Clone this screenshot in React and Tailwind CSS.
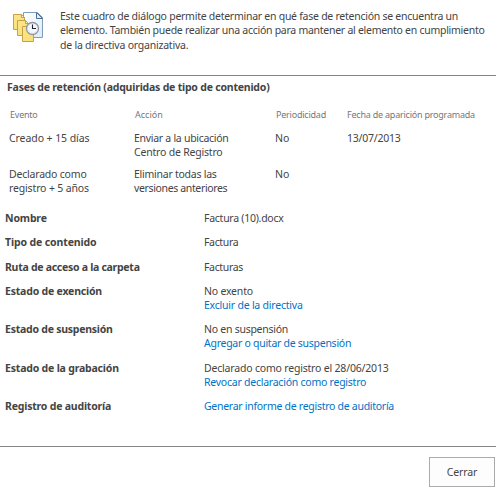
function DocumentsIcon() {
  return (
    <svg width="32" height="32" viewBox="0 0 32 32" className="block shrink-0">
      <defs>
        <linearGradient id="folderFill" x1="0" y1="0" x2="1" y2="1">
          <stop offset="0" stopColor="#fbe68a" />
          <stop offset="1" stopColor="#f8de74" />
        </linearGradient>
        <linearGradient id="pageFill" x1="0" y1="0" x2="1" y2="1">
          <stop offset="0" stopColor="#ffffff" />
          <stop offset="1" stopColor="#dcebf8" />
        </linearGradient>
      </defs>
      <path d="M11.5 0.5h14l5 5v20h-19z" fill="url(#pageFill)" stroke="#7f9cba" />
      <path d="M24.500 0.500v6h6z" fill="#dcebf8" stroke="#4d7196" />
      <path d="M1.500 2.500h8l3 3v12h-11z" fill="url(#folderFill)" stroke="#c9a04a" />
      <path d="M9.500 2.500v3h3z" fill="#fff8d0" stroke="#c9a04a" />
      <path d="M5.500 8.500h8l3 3v12h-11z" fill="url(#folderFill)" stroke="#c9a04a" />
      <path d="M13.500 8.500v3h3z" fill="#fff8d0" stroke="#c9a04a" />
      <path d="M10.500 14.500h8l3 3v12h-11z" fill="url(#folderFill)" stroke="#c9a04a" />
      <circle cx="20.500" cy="16.500" r="6" fill="#f4f8fb" stroke="#8f969d" strokeWidth="1.300" />
      <circle cx="20.500" cy="16.500" r="4.600" fill="none" stroke="#c5ccd3" strokeWidth="0.700" strokeDasharray="0.8 1.608" />
      <path d="M20.500 12.500v4h3.500" fill="none" stroke="#1c2733" strokeWidth="1.100" />
    </svg>
  );
}

function Line({ children, className = "" }) {
  return <div className={`whitespace-nowrap ${className}`}>{children}</div>;
}

function Field({ label, height, labelClass, children }) {
  return (
    <div className={`flex ${height}`}>
      <div className={`w-[199px] shrink-0 font-bold whitespace-nowrap ${labelClass}`}>{label}</div>
      <div>{children}</div>
    </div>
  );
}

export default function App() {
  return (
    <div className="flex h-[496px] w-[496px] flex-col overflow-hidden bg-white font-['Noto_Sans','Open_Sans',sans-serif] text-[10.5px] leading-[14px] text-[#444444]">
      <header className="flex h-[75px] shrink-0 pt-[9px] pl-3">
        <div className="w-12 shrink-0 pt-[3px]">
          <DocumentsIcon />
        </div>
        <div>
          <Line className="tracking-[-0.26px]">Este cuadro de diálogo permite determinar en qué fase de retención se encuentra un</Line>
          <Line className="tracking-[-0.27px]">elemento. También puede realizar una acción para mantener al elemento en cumplimiento</Line>
          <Line className="pt-px tracking-[-0.22px]">de la directiva organizativa.</Line>
        </div>
      </header>

      <main className="h-[371px] shrink-0 border-t border-[#848484] pt-1">
        <h1 className="h-7 pl-[7px] font-bold tracking-[-0.21px] whitespace-nowrap">Fases de retención (adquiridas de tipo de contenido)</h1>

        <div className="grid h-[23px] grid-cols-[125px_141px_71px_1fr] pl-[10px] text-[9px] tracking-[-0.22px] whitespace-nowrap text-[#777777]">
          <span>Evento</span>
          <span className="tracking-normal">Acción</span>
          <span>Periodicidad</span>
          <span>Fecha de aparición programada</span>
        </div>
        <div className="grid h-9 grid-cols-[125px_141px_72px_1fr] pl-[9px] whitespace-nowrap">
          <Line className="tracking-[-0.08px]">Creado + 15 días</Line>
          <div>
            <Line className="tracking-[-0.28px]">Enviar a la ubicación</Line>
            <Line className="tracking-[-0.2px]">Centro de Registro</Line>
          </div>
          <span>No</span>
          <span className="tracking-[-0.23px]">13/07/2013</span>
        </div>
        <div className="grid h-11 grid-cols-[125px_141px_72px_1fr] pl-[9px] whitespace-nowrap">
          <div>
            <Line className="tracking-[-0.2px]">Declarado como</Line>
            <Line className="tracking-[-0.15px]">registro + 5 años</Line>
          </div>
          <div>
            <Line className="tracking-[-0.25px]">Eliminar todas las</Line>
            <Line className="tracking-[-0.36px]">versiones anteriores</Line>
          </div>
          <span>No</span>
        </div>

        <section className="pl-[5px]">
          <Field label="Nombre" height="h-6" labelClass="tracking-[-0.15px]">
            <Line className="tracking-[-0.26px]">Factura (10).docx</Line>
          </Field>
          <Field label="Tipo de contenido" height="h-[25px]" labelClass="tracking-[-0.12px]">
            <Line className="tracking-[-0.35px]">Factura</Line>
          </Field>
          <Field label="Ruta de acceso a la carpeta" height="h-6" labelClass="tracking-[-0.28px]">
            <Line className="tracking-[-0.35px]">Facturas</Line>
          </Field>
          <Field label="Estado de exención" height="h-[38px]" labelClass="tracking-[-0.2px]">
            <Line className="tracking-[-0.2px]">No exento</Line>
            <Line className="tracking-[-0.22px] text-[#0072c6]">Excluir de la directiva</Line>
          </Field>
          <Field label="Estado de suspensión" height="h-[39px]" labelClass="tracking-[-0.24px]">
            <Line className="tracking-[-0.26px]">No en suspensión</Line>
            <Line className="tracking-[-0.27px] text-[#0072c6]">Agregar o quitar de suspensión</Line>
          </Field>
          <Field label="Estado de la grabación" height="h-[38px]" labelClass="tracking-[-0.19px]">
            <Line className="tracking-[-0.19px]">Declarado como registro el 28/06/2013</Line>
            <Line className="tracking-[-0.24px] text-[#0072c6]">Revocar declaración como registro</Line>
          </Field>
          <Field label="Registro de auditoría" height="h-6" labelClass="tracking-[-0.2px]">
            <Line className="tracking-[-0.28px] text-[#0072c6]">Generar informe de registro de auditoría</Line>
          </Field>
        </section>
      </main>

      <footer className="flex flex-1 items-start justify-end border-t border-[#848484] pt-[10px] pr-px">
        <button className="h-[30px] w-[66px] border border-[#ababab] bg-[#fdfdfd] tracking-[-0.1px]">Cerrar</button>
      </footer>
    </div>
  );
}
